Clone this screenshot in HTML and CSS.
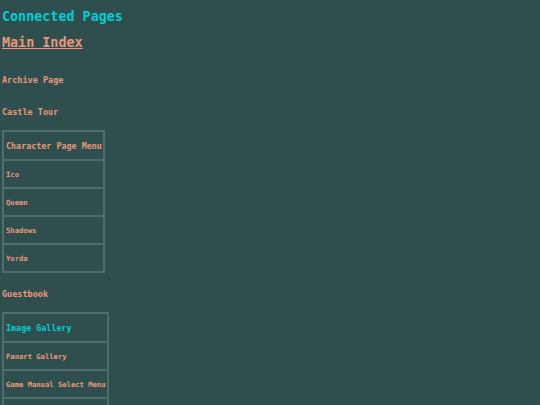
FILE: index.html
```html
<!DOCTYPE html>
<html lang="en">
  <head>
    <meta charset="UTF-8" />
    <meta name="viewport" content="width=device-width, initial-scale=1.0" />
    <title>Connected Pages</title>
    <link rel="stylesheet" href="styles.css">
  </head>
  <body>
    <h1>Connected Pages</h1>
    <h2><a href="#">Main Index</a></h2>

    <p class="page-link"><a href="#">Archive Page</a></p>
    <p class="page-link before-menu"><a href="#">Castle Tour</a></p>

    <table class="menu">
      <tr><th><a href="#">Character Page Menu</a></th></tr>
      <tr><td><a href="#">Ico</a></td></tr>
      <tr><td><a href="#">Queen</a></td></tr>
      <tr><td><a href="#">Shadows</a></td></tr>
      <tr><td><a href="#">Yorda</a></td></tr>
    </table>

    <p class="page-link before-menu"><a href="#">Guestbook</a></p>

    <table class="menu">
      <tr><th class="current">Image Gallery</th></tr>
      <tr><td><a href="#">Fanart Gallery</a></td></tr>
      <tr><td><a href="#">Game Manual Select Menu</a></td></tr>
      <tr><td><a href="#">Screenshots</a></td></tr>
    </table>
  </body>
</html>
```

FILE: styles.css
```css
body {
  background: #2f4f4f;
  font-family: "DejaVu Sans Mono", monospace;
  font-weight: bold;
  margin: 0;
  padding: 7px 2px;
  color: #e9967a;
}
a {
  color: #e9967a;
  text-decoration: none;
}
h1 {
  color: #00ced1;
  font-size: 13.4px;
  margin: 0 0 6px;
  line-height: 20px;
}
h2 {
  font-size: 13.4px;
  margin: 0 0 21px;
  line-height: 20px;
}
h2 a {
  text-decoration: underline;
}
.page-link {
  font-size: 8.5px;
  line-height: 12px;
  margin: 0 0 20px;
}
.page-link.before-menu {
  margin-bottom: 12px;
}
.menu {
  border: 1px solid #4f6d6d;
  border-spacing: 0;
  margin-bottom: 15px;
}
.menu th,
.menu td {
  border: 1px solid #4f6d6d;
  text-align: left;
  padding: 0 1px 0 2px;
}
.menu th {
  font-size: 8.4px;
  height: 27px;
}
.menu td {
  font-size: 7.2px;
  height: 26px;
}
.menu .current {
  color: #00ced1;
}
```
